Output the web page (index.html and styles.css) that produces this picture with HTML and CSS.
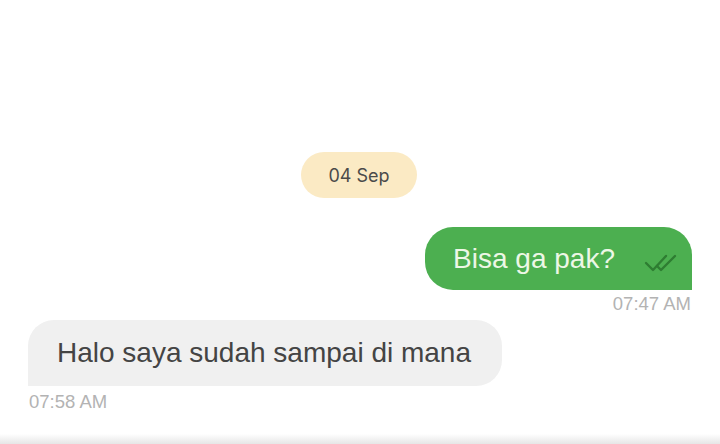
FILE: index.html
```html
<!DOCTYPE html>
<html>
<head>
<meta charset="utf-8">
<link rel="stylesheet" href="styles.css">
</head>
<body>
<div class="chat">
  <div class="date-row"><span class="date-pill">04 Sep</span></div>
  <div class="msg out">
    <div class="bubble bubble-out">
      <span class="text">Bisa ga pak?</span>
      <svg class="ticks" width="34" height="20" viewBox="0 0 34 20"><path d="M2 10 L9 17 L22 3" fill="none" stroke="#2e7d32" stroke-width="2.4" stroke-linecap="round" stroke-linejoin="round"/><path d="M13 13 L17 17 L31 3" fill="none" stroke="#2e7d32" stroke-width="2.4" stroke-linecap="round" stroke-linejoin="round"/></svg>
    </div>
    <div class="time">07:47 AM</div>
  </div>
  <div class="msg in">
    <div class="bubble bubble-in"><span class="text">Halo saya sudah sampai di mana</span></div>
    <div class="time">07:58 AM</div>
  </div>
</div>
<div class="bottom-shadow"></div>
</body>
</html>
```
FILE: styles.css
```css
html, body {
  margin: 0;
  padding: 0;
  background: #ffffff;
  width: 720px;
  height: 444px;
  overflow: hidden;
  font-family: "Liberation Sans", Arial, sans-serif;
}
body {
  display: flex;
  flex-direction: column;
}
.chat {
  flex: 1;
  display: flex;
  flex-direction: column;
  padding: 152px 28px 0 28px;
}
.date-row {
  display: flex;
  justify-content: center;
}
.date-pill {
  background: #fbeac4;
  color: #4a4a4a;
  font-family: "Inter", "Liberation Sans", sans-serif;
  font-size: 18px;
  width: 116px;
  height: 46px;
  border-radius: 23px;
  display: flex;
  align-items: center;
  justify-content: center;
  margin-left: -2px;
}
.msg {
  display: flex;
  flex-direction: column;
}
.msg.out {
  align-items: flex-end;
  margin-top: 29px;
}
.msg.in {
  align-items: flex-start;
  margin-top: 6px;
}
.bubble {
  display: flex;
  align-items: center;
  font-size: 28px;
}
.bubble-out {
  background: #4caf50;
  color: #edf7e6;
  height: 63px;
  padding: 0 14px 0 28px;
  border-radius: 28px 28px 0 28px;
}
.bubble-out .ticks {
  margin-left: 29px;
  margin-top: 8px;
}
.bubble-in {
  background: #f0f0f0;
  color: #444444;
  height: 66px;
  padding: 0 31px 0 29px;
  border-radius: 26px 26px 26px 0;
}
.time {
  color: #b3b3b3;
  font-size: 18.5px;
  line-height: 20px;
  margin-top: 4px;
}
.msg.out .time { margin-right: 1px; }
.msg.in .time { margin-left: 1px; margin-top: 6px; }
.bottom-shadow {
  height: 10px;
  background: linear-gradient(#ffffff, #e6e6e6);
}
```
